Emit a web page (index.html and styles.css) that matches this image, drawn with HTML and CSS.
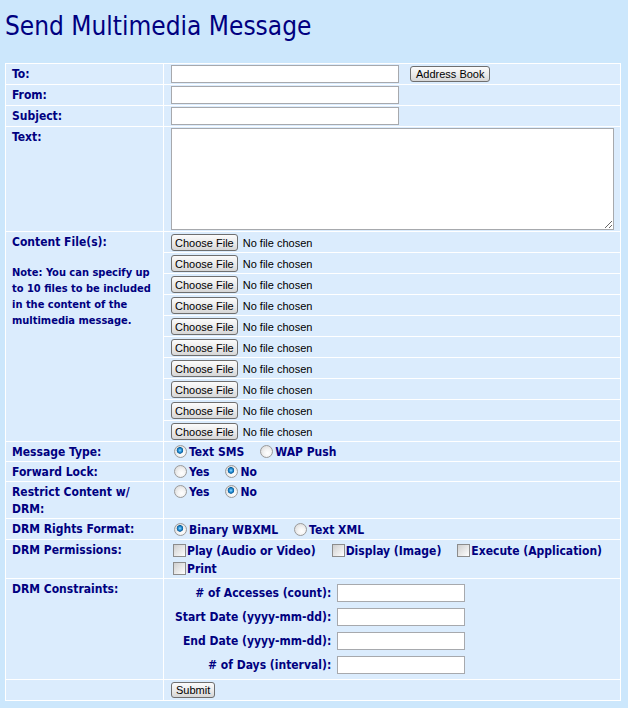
FILE: index.html
```html
<!DOCTYPE html>
<html lang="en">
<head>
<meta charset="utf-8">
<title>Send Multimedia Message</title>
<link rel="stylesheet" href="styles.css">
</head>
<body>
<h1 class="title">Send Multimedia Message</h1>
<form class="mms-form" action="#" method="post">
  <table class="form-table">
    <colgroup><col class="col-label"><col class="col-field"></colgroup>
    <tr>
      <th class="label">To:</th>
      <td class="field"><input type="text" class="text-input" name="to"><button type="button" class="btn btn-address">Address Book</button></td>
    </tr>
    <tr>
      <th class="label">From:</th>
      <td class="field"><input type="text" class="text-input" name="from"></td>
    </tr>
    <tr>
      <th class="label">Subject:</th>
      <td class="field"><input type="text" class="text-input" name="subject"></td>
    </tr>
    <tr>
      <th class="label">Text:</th>
      <td class="field"><textarea class="message-text" name="text"></textarea></td>
    </tr>
    <tr>
      <th class="label" rowspan="10">Content File(s):
        <p class="note">Note: You can specify up to 10 files to be included in the content of the multimedia message.</p>
      </th>
      <td class="field file-cell"><input type="file" class="file-input" name="file1"></td>
    </tr>
    <tr><td class="field file-cell"><input type="file" class="file-input" name="file2"></td></tr>
    <tr><td class="field file-cell"><input type="file" class="file-input" name="file3"></td></tr>
    <tr><td class="field file-cell"><input type="file" class="file-input" name="file4"></td></tr>
    <tr><td class="field file-cell"><input type="file" class="file-input" name="file5"></td></tr>
    <tr><td class="field file-cell"><input type="file" class="file-input" name="file6"></td></tr>
    <tr><td class="field file-cell"><input type="file" class="file-input" name="file7"></td></tr>
    <tr><td class="field file-cell"><input type="file" class="file-input" name="file8"></td></tr>
    <tr><td class="field file-cell"><input type="file" class="file-input" name="file9"></td></tr>
    <tr><td class="field file-cell"><input type="file" class="file-input" name="file10"></td></tr>
    <tr>
      <th class="label">Message Type:</th>
      <td class="field">
        <div class="choice">
          <label class="option"><input type="radio" class="radio" name="msgtype" checked>Text SMS</label>
          <label class="option"><input type="radio" class="radio" name="msgtype">WAP Push</label>
        </div>
      </td>
    </tr>
    <tr>
      <th class="label">Forward Lock:</th>
      <td class="field">
        <div class="choice">
          <label class="option"><input type="radio" class="radio" name="fwdlock">Yes</label>
          <label class="option"><input type="radio" class="radio" name="fwdlock" checked>No</label>
        </div>
      </td>
    </tr>
    <tr>
      <th class="label">Restrict Content w/ DRM:</th>
      <td class="field">
        <div class="choice">
          <label class="option"><input type="radio" class="radio" name="restrict">Yes</label>
          <label class="option"><input type="radio" class="radio" name="restrict" checked>No</label>
        </div>
      </td>
    </tr>
    <tr>
      <th class="label">DRM Rights Format:</th>
      <td class="field">
        <div class="choice choice-tall">
          <label class="option"><input type="radio" class="radio" name="format" checked>Binary WBXML</label>
          <label class="option"><input type="radio" class="radio" name="format">Text XML</label>
        </div>
      </td>
    </tr>
    <tr>
      <th class="label">DRM Permissions:</th>
      <td class="field">
        <div class="choice perms">
          <label class="option"><input type="checkbox" class="check" name="play">Play (Audio or Video)</label>
          <label class="option"><input type="checkbox" class="check" name="display">Display (Image)</label>
          <label class="option"><input type="checkbox" class="check" name="execute">Execute (Application)</label>
          <label class="option"><input type="checkbox" class="check" name="print">Print</label>
        </div>
      </td>
    </tr>
    <tr>
      <th class="label">DRM Constraints:</th>
      <td class="field">
        <table class="constraints">
          <tr><th class="c-label"># of Accesses (count):</th><td class="c-field"><input type="text" class="text-input small-input" name="count"></td></tr>
          <tr><th class="c-label">Start Date (yyyy-mm-dd):</th><td class="c-field"><input type="text" class="text-input small-input" name="start"></td></tr>
          <tr><th class="c-label">End Date (yyyy-mm-dd):</th><td class="c-field"><input type="text" class="text-input small-input" name="end"></td></tr>
          <tr><th class="c-label"># of Days (interval):</th><td class="c-field"><input type="text" class="text-input small-input" name="interval"></td></tr>
        </table>
      </td>
    </tr>
    <tr>
      <th class="label"></th>
      <td class="field"><button type="submit" class="btn btn-submit">Submit</button></td>
    </tr>
  </table>
</form>
</body>
</html>
```

FILE: styles.css
```css
html, body {
  margin: 0;
  padding: 0;
  background: #cce7fc;
}

body {
  padding: 0 5px;
  color: #000080;
  font-family: "DejaVu Sans Condensed", "DejaVu Sans", sans-serif;
  font-stretch: condensed;
}

.title {
  margin: 11px 0 0;
  font-size: 26px;
  line-height: 30px;
  font-weight: normal;
  color: #000080;
}

.mms-form {
  margin: 22px 0 0;
}

.form-table {
  width: 616px;
  table-layout: fixed;
  border-collapse: separate;
  border-spacing: 1px;
  background: #ffffff;
}

.col-label { width: 157px; }
.col-field { width: 456px; }

.label,
.field {
  background: #dbecfd;
  vertical-align: top;
  text-align: left;
}

.label {
  padding: 2px 6px 0;
  font-size: 12px;
  font-weight: bold;
  line-height: 17px;
}

.field {
  padding: 1px 7px;
  font-size: 12px;
  font-weight: bold;
  line-height: 18px;
}

.text-input {
  box-sizing: border-box;
  width: 228px;
  height: 18px;
  margin: 0;
  padding: 0 2px;
  border: 1px solid #a7a9ad;
  background: #fff;
  vertical-align: top;
  font: 12px "Liberation Sans", sans-serif;
}

.btn {
  box-sizing: border-box;
  height: 16px;
  padding: 0 5px;
  border: 1px solid #6f6f6f;
  border-radius: 3px;
  background: linear-gradient(#fbfbfb, #e8e8e8 60%, #d6d6d6);
  color: #000;
  font: 11px/13px "Liberation Sans", Arial, sans-serif;
  vertical-align: top;
}

.btn-address {
  margin: 1px 0 0 11px;
}

.btn-submit {
  margin: 1px 0 0 0;
  padding: 0 4px;
}

.message-text {
  display: block;
  box-sizing: border-box;
  width: 443px;
  height: 102px;
  margin: 0;
  border: 1px solid #a7a9ad;
  background: #fff;
}

.note {
  margin: 14px 0 0;
  font-size: 11px;
  line-height: 16px;
  font-weight: bold;
}

/* file pickers */
.file-input {
  display: block;
  height: 18px;
  margin: 0;
  padding: 0;
  color: #000;
  font: 11px "Liberation Sans", Arial, sans-serif;
}

.file-input::file-selector-button {
  box-sizing: border-box;
  height: 17px;
  margin: 1px 5px 0 0;
  padding: 0 3px;
  border: 1px solid #6f6f6f;
  border-radius: 3px;
  background: linear-gradient(#fbfbfb, #e8e8e8 60%, #d6d6d6);
  color: #000;
  font: 11px "Liberation Sans", Arial, sans-serif;
}

/* radio / checkbox groups: lines start 1px low, row height stays fixed */
.choice {
  display: flex;
  flex-wrap: wrap;
  column-gap: 13px;
  padding-top: 1px;
  height: 16px;
  line-height: 17px;
}

.choice-tall {
  height: 17px;
  line-height: 18px;
}

.perms {
  column-gap: 14px;
  height: 35px;
  line-height: 18px;
}

.option {
  display: block;
  white-space: nowrap;
}

.radio {
  appearance: none;
  -webkit-appearance: none;
  box-sizing: border-box;
  width: 13px;
  height: 13px;
  margin: 0 2px 0 3px;
  border: 1px solid #9a9a9a;
  border-radius: 50%;
  background: radial-gradient(circle at 60% 65%, #ffffff 0, #f4f4f4 35%, #d4d4d4 100%);
  vertical-align: -2px;
}

.radio:checked {
  background:
    radial-gradient(circle at 45% 40%, #9fdcff 0, #2e9ae0 1.5px, #0b5d99 3px, rgba(11, 93, 153, 0) 3.6px),
    radial-gradient(circle at 60% 65%, #ffffff 0, #f4f4f4 35%, #d4d4d4 100%);
}

.check {
  appearance: none;
  -webkit-appearance: none;
  box-sizing: border-box;
  width: 13px;
  height: 13px;
  margin: 0 1px 0 2px;
  border: 1px solid #8c8c8c;
  background: linear-gradient(135deg, #cfcfcf, #f0f0f0 70%, #ffffff);
  vertical-align: -2px;
}

/* constraints sub-table */
.constraints {
  border-collapse: separate;
  border-spacing: 2px;
  margin: 0;
}

.c-label,
.c-field {
  padding: 2px;
  vertical-align: top;
}

.c-label {
  text-align: right;
  font-size: 12px;
  font-weight: bold;
  line-height: 18px;
  white-space: nowrap;
}

.small-input {
  display: block;
  width: 128px;
}
```
